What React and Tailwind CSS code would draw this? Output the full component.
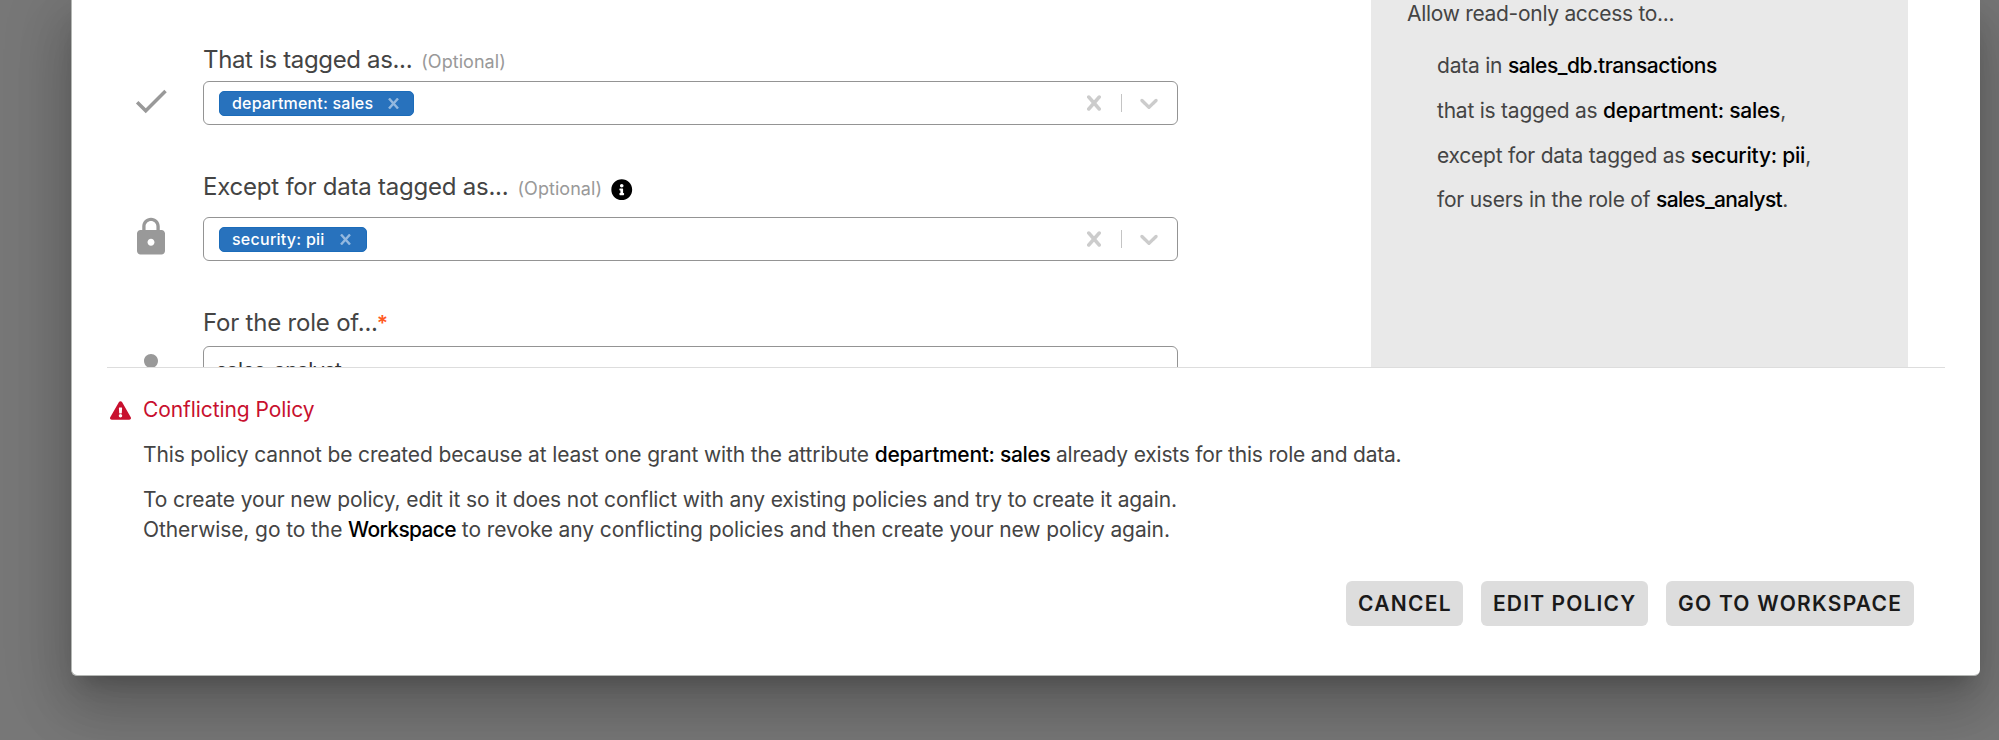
import { FaInfoCircle, FaExclamationTriangle } from "react-icons/fa";

function Clear() {
  return (
    <svg viewBox="0 0 20 20" className="size-[30px] shrink-0 fill-[#cccccc]">
      <path d="M14.348 14.849c-0.469 0.469-1.229 0.469-1.697 0l-2.651-3.030-2.651 3.029c-0.469 0.469-1.229 0.469-1.697 0-0.469-0.469-0.469-1.229 0-1.697l2.758-3.15-2.759-3.152c-0.469-0.469-0.469-1.228 0-1.697s1.228-0.469 1.697 0l2.652 3.031 2.651-3.031c0.469-0.469 1.228-0.469 1.697 0s0.469 1.229 0 1.697l-2.758 3.152 2.758 3.15c0.469 0.469 0.469 1.229 0 1.698z" />
    </svg>
  );
}

function Chevron() {
  return (
    <svg viewBox="0 0 20 20" className="size-[30px] shrink-0 fill-[#cccccc]">
      <path d="M4.516 7.548c0.436-0.446 1.043-0.481 1.576 0l3.908 3.747 3.908-3.747c0.533-0.481 1.141-0.446 1.574 0 0.436 0.445 0.408 1.197 0 1.615-0.406 0.418-4.695 4.502-4.695 4.502-0.217 0.223-0.502 0.335-0.787 0.335s-0.57-0.112-0.789-0.335c0 0-4.287-4.084-4.695-4.502s-0.436-1.17 0-1.615z" />
    </svg>
  );
}

function RowIcon({ d, className }) {
  return (
    <svg viewBox="0 0 24 24" className={`size-[42px] shrink-0 fill-[#999999] ${className}`}>
      <path d={d} fillRule="evenodd" />
    </svg>
  );
}

function TagSelect({ children, tagClass }) {
  return (
    <div className="flex h-11 w-[975px] items-center rounded-[6px] border border-[#949494] pr-[13px] pl-[15px]">
      <div className={`flex h-[25px] items-center justify-between rounded-[5px] border border-[#1b6cba] bg-[#2872bd] pl-3 text-base font-medium text-white ${tagClass}`}>
        {children}
        <svg viewBox="0 0 11 11" className="size-[11px] stroke-[#93b8df] stroke-[2.4]">
          <path d="M1 .5 10 10.5M10 .5 1 10.5" />
        </svg>
      </div>
      <div className="ml-auto flex items-center gap-3">
        <Clear />
        <div className="h-[18px] w-px bg-[#c4c4c4]" />
        <Chevron />
      </div>
    </div>
  );
}

function Optional() {
  return <span className="ml-[9px] text-lg leading-none tracking-[0.05px] text-[#999999]">(Optional)</span>;
}

const LABEL = "flex items-baseline text-2xl leading-[37px] whitespace-nowrap text-[#444444]";
const BUTTON = "h-[45px] rounded-[6px] bg-[#dddddd] text-left text-[21px] leading-[46px] font-semibold whitespace-nowrap text-[#1a1a1a]";

export default function App() {
  return (
    <div className="h-[740px] overflow-hidden bg-[#777777] font-['Inter','Liberation_Sans',sans-serif]">
      <div className="ml-[71px] flex h-[676px] w-[1909px] flex-col rounded-b-[6px] border-b border-l border-[#b4b7b4] bg-white pl-[35px] shadow-[0_15px_21px_-10px_rgba(0,0,0,0.2),0_34px_53px_4px_rgba(0,0,0,0.14),0_13px_64px_11px_rgba(0,0,0,0.12)]">
        <div className="flex h-[367px] shrink-0 overflow-hidden">
          <div className="flex w-[1264px] shrink-0 flex-col gap-[43px] pt-[41px] pl-[23px]">
            <div className="flex gap-[31px]">
              <RowIcon className="mt-[39px]" d="M9 16.2 4.8 12l-1.4 1.4L9 19 21 7l-1.4-1.4z" />
              <div>
                <div className={`h-10 ${LABEL}`}>
                  <span className="tracking-[-0.35px]">That is tagged as...</span>
                  <Optional />
                </div>
                <TagSelect tagClass="w-[195px] pr-[14px]">
                  <span className="tracking-[0.2px]">department: sales</span>
                </TagSelect>
              </div>
            </div>
            <div className="flex gap-[31px]">
              <RowIcon
                className="mt-12"
                d="M18 8h-1V6c0-2.76-2.24-5-5-5S7 3.24 7 6v2H6c-1.100 0-2 .9-2 2v10c0 1.100.9 2 2 2h12c1.100 0 2-.9 2-2V10c0-1.100-.9-2-2-2zm-6 9c-1.100 0-2-.9-2-2s.9-2 2-2 2 .9 2 2-.9 2-2 2zm3.100-9H8.900V6c0-1.710 1.390-3.100 3.100-3.100 1.710 0 3.100 1.390 3.100 3.100v2z"
              />
              <div>
                <div className={`h-[49px] ${LABEL}`}>
                  <span className="tracking-[-0.23px]">Except for data tagged as...</span>
                  <Optional />
                  <FaInfoCircle className="ml-[9px] size-[21.5px] translate-y-[5px] text-black" />
                </div>
                <TagSelect tagClass="w-[148px] pr-[15px]">
                  <span className="tracking-[0.25px]">security: pii</span>
                </TagSelect>
              </div>
            </div>
            <div className="flex gap-[31px]">
              <RowIcon
                className="mt-[43px]"
                d="M12 12c2.210 0 4-1.790 4-4s-1.790-4-4-4-4 1.790-4 4 1.790 4 4 4zm0 2c-2.670 0-8 1.340-8 4v2h16v-2c0-2.660-5.330-4-8-4z"
              />
              <div>
                <div className={`h-[42px] ${LABEL}`}>
                  <span className="tracking-[-0.2px]">For the role of...</span>
                  <span className="-ml-px text-[21px] font-semibold text-[#ff5a1f]">*</span>
                </div>
                <div className="h-11 w-[975px] rounded-[6px] border border-[#949494] pl-3 text-[21px] leading-[47px] tracking-[-0.5px] text-[#333333]">
                  sales_analyst
                </div>
              </div>
            </div>
          </div>
          <div className="w-[537px] bg-[#e9e9e9] pl-9 text-[21px] leading-[27px] whitespace-nowrap text-[#444444]">
            <div className="tracking-[-0.3px]">Allow read-only access to...</div>
            <div className="mt-[17px] pl-[30px] leading-[44.8px] tracking-[-0.23px]">
              <p>
                data in <span className="font-medium tracking-[-0.45px] text-black">sales_db.transactions</span>
              </p>
              <p>
                that is tagged as <span className="font-medium text-black">department: sales</span>,
              </p>
              <p>
                except for data tagged as <span className="font-medium text-black">security: pii</span>,
              </p>
              <p>
                for users in the role of <span className="font-medium tracking-[-0.63px] text-black">sales_analyst</span>.
              </p>
            </div>
          </div>
        </div>

        <div className="flex w-[1838px] grow flex-col border-t border-[#dddddd] pt-[27px] pl-[3px] text-[21px] leading-[30px] whitespace-nowrap text-[#444444]">
          <div className="flex items-center text-[#c8102e]">
            <FaExclamationTriangle className="h-[19px] w-[21px]" />
            <span className="ml-3 tracking-[-0.08px]">Conflicting Policy</span>
          </div>
          <div className="pl-[33px]">
            <p className="mt-[15px] tracking-[-0.14px]">
              This policy cannot be created because at least one grant with the attribute{" "}
              <span className="font-medium tracking-[-0.3px] text-black">department: sales </span>
              <span className="tracking-[-0.2px]">already exists for this role and data.</span>
            </p>
            <p className="mt-[15px] tracking-[-0.125px]">
              To create your new policy, edit it so it does not conflict with any existing policies and try to create it again.
            </p>
            <p className="tracking-[-0.1px]">
              Otherwise, go to the <span className="font-medium tracking-[-0.65px] text-black">Workspace</span>{" "}
              to revoke any conflicting policies and then create your new policy again.
            </p>
          </div>
          <div className="mt-9 mr-[31px] flex justify-end gap-[18px]">
            <button className={`w-[117px] pl-3 tracking-[1.3px] ${BUTTON}`}>CANCEL</button>
            <button className={`w-[167px] pl-3 tracking-[1.15px] ${BUTTON}`}>EDIT POLICY</button>
            <button className={`w-[248px] pl-3 tracking-[1.25px] ${BUTTON}`}>GO TO WORKSPACE</button>
          </div>
        </div>
      </div>
    </div>
  );
}
